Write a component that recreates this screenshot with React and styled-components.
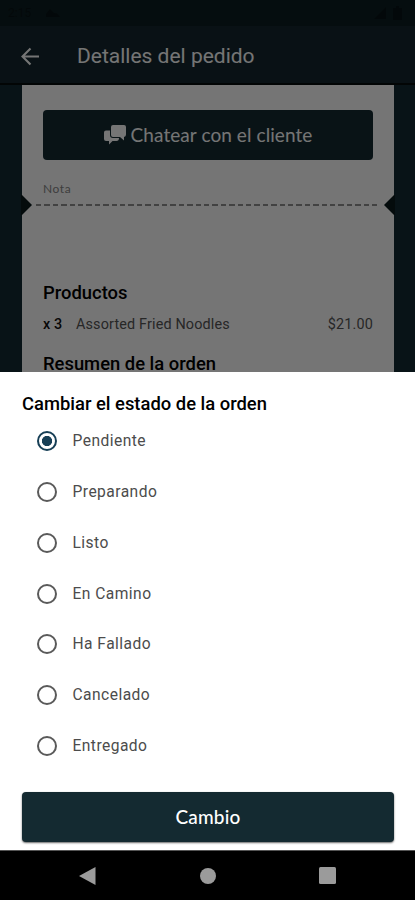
import React, { useState } from 'react';
import styled, { createGlobalStyle } from 'styled-components';

const GlobalStyle = createGlobalStyle`
  * {
    box-sizing: border-box;
  }

  body {
    margin: 0;
    background: #000;
    font-family: Roboto, sans-serif;
  }
`;

const Screen = styled.main`
  display: flex;
  flex-direction: column;
  width: 415px;
  height: 900px;
  overflow: hidden;
`;

const Backdrop = styled.div`
  position: relative;
  display: flex;
  flex-direction: column;
  height: 372px;
  overflow: hidden;
  background: #132b33;
`;

const Scrim = styled.div`
  position: absolute;
  inset: 0;
  background: rgba(0, 0, 0, 0.54);
`;

const StatusBar = styled.div`
  display: flex;
  flex: none;
  align-items: center;
  justify-content: space-between;
  height: 26px;
  padding: 0 13px 0 8px;
  background: #0d1e21;
  color: #081316;
  font-size: 12px;
`;

const StatusGroup = styled.div`
  display: flex;
  align-items: center;
  gap: ${({ $gap }) => $gap}px;
`;

const AppBar = styled.header`
  display: flex;
  flex: none;
  align-items: center;
  height: 59px;
  padding: 3px 20px 0;
  border-bottom: 2px solid #050b0d;
  background: #14272e;
  color: #fff;

  h1 {
    margin: 0 0 0 36px;
    font-size: 21px;
    font-weight: 400;
    line-height: 28px;
  }
`;

const Ticket = styled.section`
  flex: none;
  height: 400px;
  margin: 0 21px 0 22px;
  background: #fff;
`;

const TicketTop = styled.div`
  padding: 25px 21px 0;
  height: 114px;
`;

const Button = styled.button`
  display: flex;
  align-items: center;
  justify-content: center;
  gap: 5px;
  width: 100%;
  height: 50px;
  padding: 0 0 2px;
  border: 0;
  border-radius: 4px;
  background: #142a31;
  box-shadow: ${({ $raised }) => ($raised ? '0 1px 2px rgba(0, 0, 0, 0.6)' : 'none')};
  color: #fff;
  font-family: Lato, sans-serif;
  font-size: 19px;
  font-weight: ${({ $weight }) => $weight};
  letter-spacing: ${({ $spacing }) => $spacing}px;
`;

const Note = styled.p`
  margin: 22px 0 0;
  color: #888;
  font-family: Lato, sans-serif;
  font-size: 12px;
  letter-spacing: 0.6px;
  line-height: 14px;
`;

const Perforation = styled.div`
  display: flex;
  align-items: center;
  justify-content: space-between;
  height: 12px;
`;

const Notch = styled.svg`
  display: block;
  flex: none;
  overflow: visible;
`;

const Dashes = styled.div`
  flex: 1;
  height: 2px;
  margin: 0 4px 0 1px;
  background: repeating-linear-gradient(to right, transparent 0 3px, #909090 3px 8.4px);
`;

const TicketBody = styled.div`
  padding: 70px 21px 0;
`;

const Heading = styled.h2`
  margin: 0;
  color: #000;
  font-size: 18.4px;
  font-weight: ${({ $weight = 500 }) => $weight};
  line-height: 24px;
`;

const Product = styled.div`
  display: flex;
  align-items: center;
  height: 20px;
  margin: 9px 0 18px;
  color: #555;
  font-size: 14.4px;
  letter-spacing: 0.15px;

  strong {
    width: 33px;
    color: #111;
    font-weight: 500;
  }

  span:last-child {
    margin-left: auto;
  }
`;

const Sheet = styled.section`
  display: flex;
  flex-direction: column;
  height: 478px;
  padding: 20px 21px 8px 22px;
  background: #fff;
`;

const Options = styled.div`
  display: flex;
  flex-direction: column;
  margin-bottom: auto;
`;

const Option = styled.label`
  display: flex;
  align-items: center;
  height: 50.75px;
  padding-left: 15px;
  color: #4c4c4c;
  font-size: 15.6px;
  letter-spacing: 0.45px;

  input {
    appearance: none;
    width: 20px;
    height: 20px;
    margin: 0 15.5px 0 0;
    border: 2px solid #5a5a5a;
    border-radius: 50%;
  }

  input:checked {
    border-color: #173f56;
    background: radial-gradient(circle, #173f56 4.8px, transparent 5.4px);
  }
`;

const NavBar = styled.nav`
  display: flex;
  align-items: center;
  justify-content: space-between;
  height: 50px;
  padding: 0 79px;
  border-top: 1px solid #555;
  background: #000;
  color: #9b9b9b;
`;

const BackArrow = () => (
  <svg width="21" height="21" viewBox="0 0 21 21" fill="none" stroke="currentColor" strokeWidth="2.1">
    <path d="M19 10.5H3M10.5 2.5l-8 8 8 8" />
  </svg>
);

const ChatIcon = () => (
  <svg width="22" height="21" viewBox="0 0 22 21" fill="currentColor">
    <path d="M9 1h11q2 0 2 2v7.500q0 2-2 2.500v3.500L16 13H9q-2 0-2-2V3q0-2 2-2z" />
    <path
      d="M2 6.500h4V11q0 3 3 3h6q0 3-2.500 3H8.500L5 20.500V17H2q-2 0-2-2V8.500q0-2 2-2z"
    />
  </svg>
);

const states = ['Pendiente', 'Preparando', 'Listo', 'En Camino', 'Ha Fallado', 'Cancelado', 'Entregado'];

const App = () => {
  const [selected, setSelected] = useState('Pendiente');

  return (
    <Screen>
      <GlobalStyle />
      <Backdrop>
        <StatusBar>
          <StatusGroup $gap={15}>
            <span>2:15</span>
            <svg width="14" height="8" viewBox="0 0 14 8" fill="currentColor">
              <path d="M0 8V5l4-5 4 4 3 .5 3 3.500z" />
            </svg>
          </StatusGroup>
          <StatusGroup $gap={7}>
            <svg width="12" height="12" viewBox="0 0 12 12" fill="currentColor">
              <path d="M12 0v12H0z" />
            </svg>
            <svg width="9" height="14" viewBox="0 0 9 14" fill="currentColor">
              <path d="M3 0h3v2h3v12H0V2h3z" />
            </svg>
          </StatusGroup>
        </StatusBar>
        <AppBar>
          <BackArrow />
          <h1>Detalles del pedido</h1>
        </AppBar>
        <Ticket>
          <TicketTop>
            <Button $weight={400} $spacing={0.08}>
              <ChatIcon />
              Chatear con el cliente
            </Button>
            <Note>Nota</Note>
          </TicketTop>
          <Perforation>
            <Notch width="10" height="20" viewBox="0 0 10 20" fill="#0a181c">
              <path d="M-1 0h1l10 10L0 20h-1z" />
            </Notch>
            <Dashes />
            <Notch width="10" height="20" viewBox="0 0 10 20" fill="#0a181c">
              <path d="M11 0h-1L0 10l10 10h1z" />
            </Notch>
          </Perforation>
          <TicketBody>
            <Heading>Productos</Heading>
            <Product>
              <strong>x 3</strong>
              <span>Assorted Fried Noodles</span>
              <span>$21.00</span>
            </Product>
            <Heading>Resumen de la orden</Heading>
          </TicketBody>
        </Ticket>
        <Scrim />
      </Backdrop>
      <Sheet>
        <Heading>Cambiar el estado de la orden</Heading>
        <Options>
          {states.map(state => (
            <Option key={state}>
              <input
                type="radio"
                name="state"
                checked={selected === state}
                onChange={() => setSelected(state)}
              />
              {state}
            </Option>
          ))}
        </Options>
        <Button $raised $weight={500} $spacing={0.2}>
          Cambio
        </Button>
      </Sheet>
      <NavBar>
        <svg width="17" height="18" viewBox="0 0 17 18" fill="currentColor">
          <path d="M16.500 0v18L0 9z" />
        </svg>
        <svg width="16" height="16" viewBox="0 0 16 16" fill="currentColor">
          <circle cx="8" cy="8" r="8" />
        </svg>
        <svg width="17" height="17" viewBox="0 0 17 17" fill="currentColor">
          <rect width="17" height="17" rx="1.500" />
        </svg>
      </NavBar>
    </Screen>
  );
};

export default App;
